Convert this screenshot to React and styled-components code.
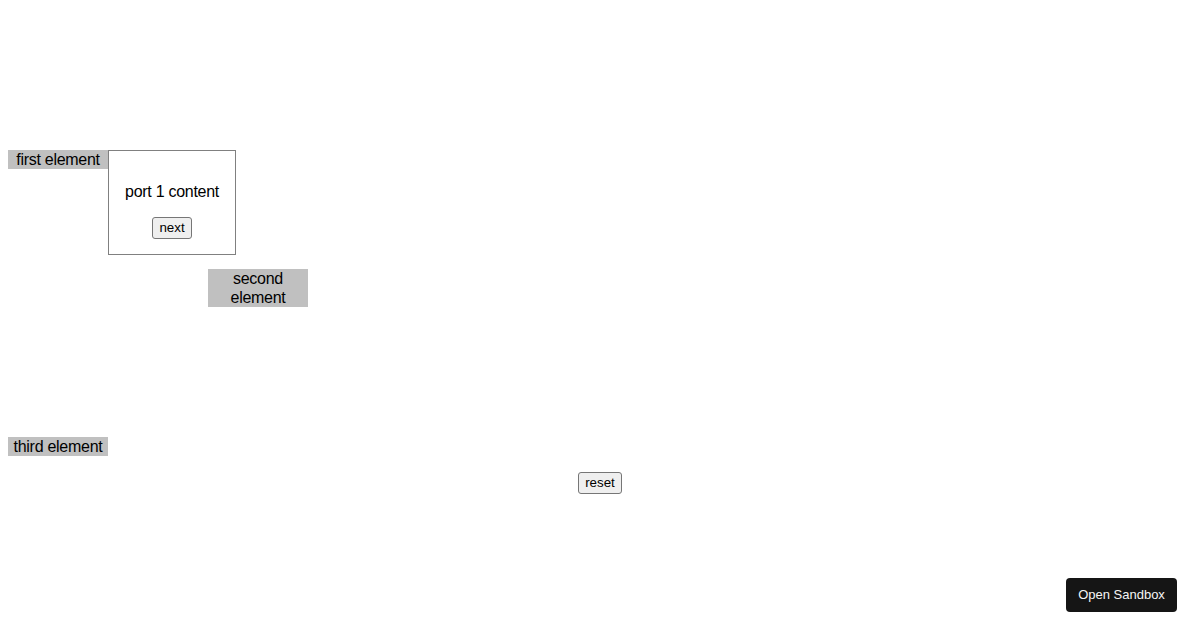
import styled, { createGlobalStyle } from 'styled-components';

const GlobalStyle = createGlobalStyle`
  body {
    margin: 8px;
    font-family: "Liberation Sans", Arial, sans-serif;
    font-size: 16px;
    letter-spacing: -0.28px;
    color: #000;
    background: #fff;
  }
`;

const Page = styled.div`
  display: flex;
  flex-direction: column;
  padding-top: 142px;
`;

const Anchor = styled.div`
  position: relative;
  width: 100px;
  margin-left: ${props => props.$offset || 0}px;
  margin-top: ${props => props.$top || 0}px;
`;

const Element = styled.div`
  width: 100px;
  background: #c0c0c0;
  text-align: center;
  line-height: 19px;
`;

const Popover = styled.div`
  position: absolute;
  top: 0;
  left: 100px;
  box-sizing: border-box;
  width: 128px;
  padding: 16px 15px 15px;
  border: 1px solid #808080;
  background: #fff;
  text-align: center;
  z-index: 2;
`;

const PopoverText = styled.p`
  margin: 16px 0;
  line-height: 18px;
  white-space: nowrap;
`;

const PlainButton = styled.button`
  font-family: "Liberation Sans", Arial, sans-serif;
  font-size: 13.33px;
  letter-spacing: normal;
  line-height: 16px;
  padding: 2px 6px;
  background: #efefef;
  border: 1px solid #767676;
  border-radius: 3px;
  color: #000;
`;

const Footer = styled.div`
  display: flex;
  justify-content: center;
  margin-top: 16px;
`;

const SandboxButton = styled.button`
  position: fixed;
  right: 23px;
  bottom: 18px;
  width: 111px;
  height: 34px;
  padding: 0 0 2px;
  border: none;
  border-radius: 4px;
  background: #151515;
  color: #f5f5f5;
  font-family: "Liberation Sans", Arial, sans-serif;
  font-size: 13px;
  letter-spacing: normal;
  cursor: pointer;
`;

export default function App() {
  return (
    <>
      <GlobalStyle />
      <Page>
        <Anchor>
          <Element>first element</Element>
          <Popover>
            <PopoverText>port 1 content</PopoverText>
            <PlainButton>next</PlainButton>
          </Popover>
        </Anchor>
        <Anchor $offset={200} $top={100}>
          <Element>second element</Element>
        </Anchor>
        <Anchor $top={130}>
          <Element>third element</Element>
        </Anchor>
        <Footer>
          <PlainButton>reset</PlainButton>
        </Footer>
      </Page>
      <SandboxButton>Open Sandbox</SandboxButton>
    </>
  );
}
